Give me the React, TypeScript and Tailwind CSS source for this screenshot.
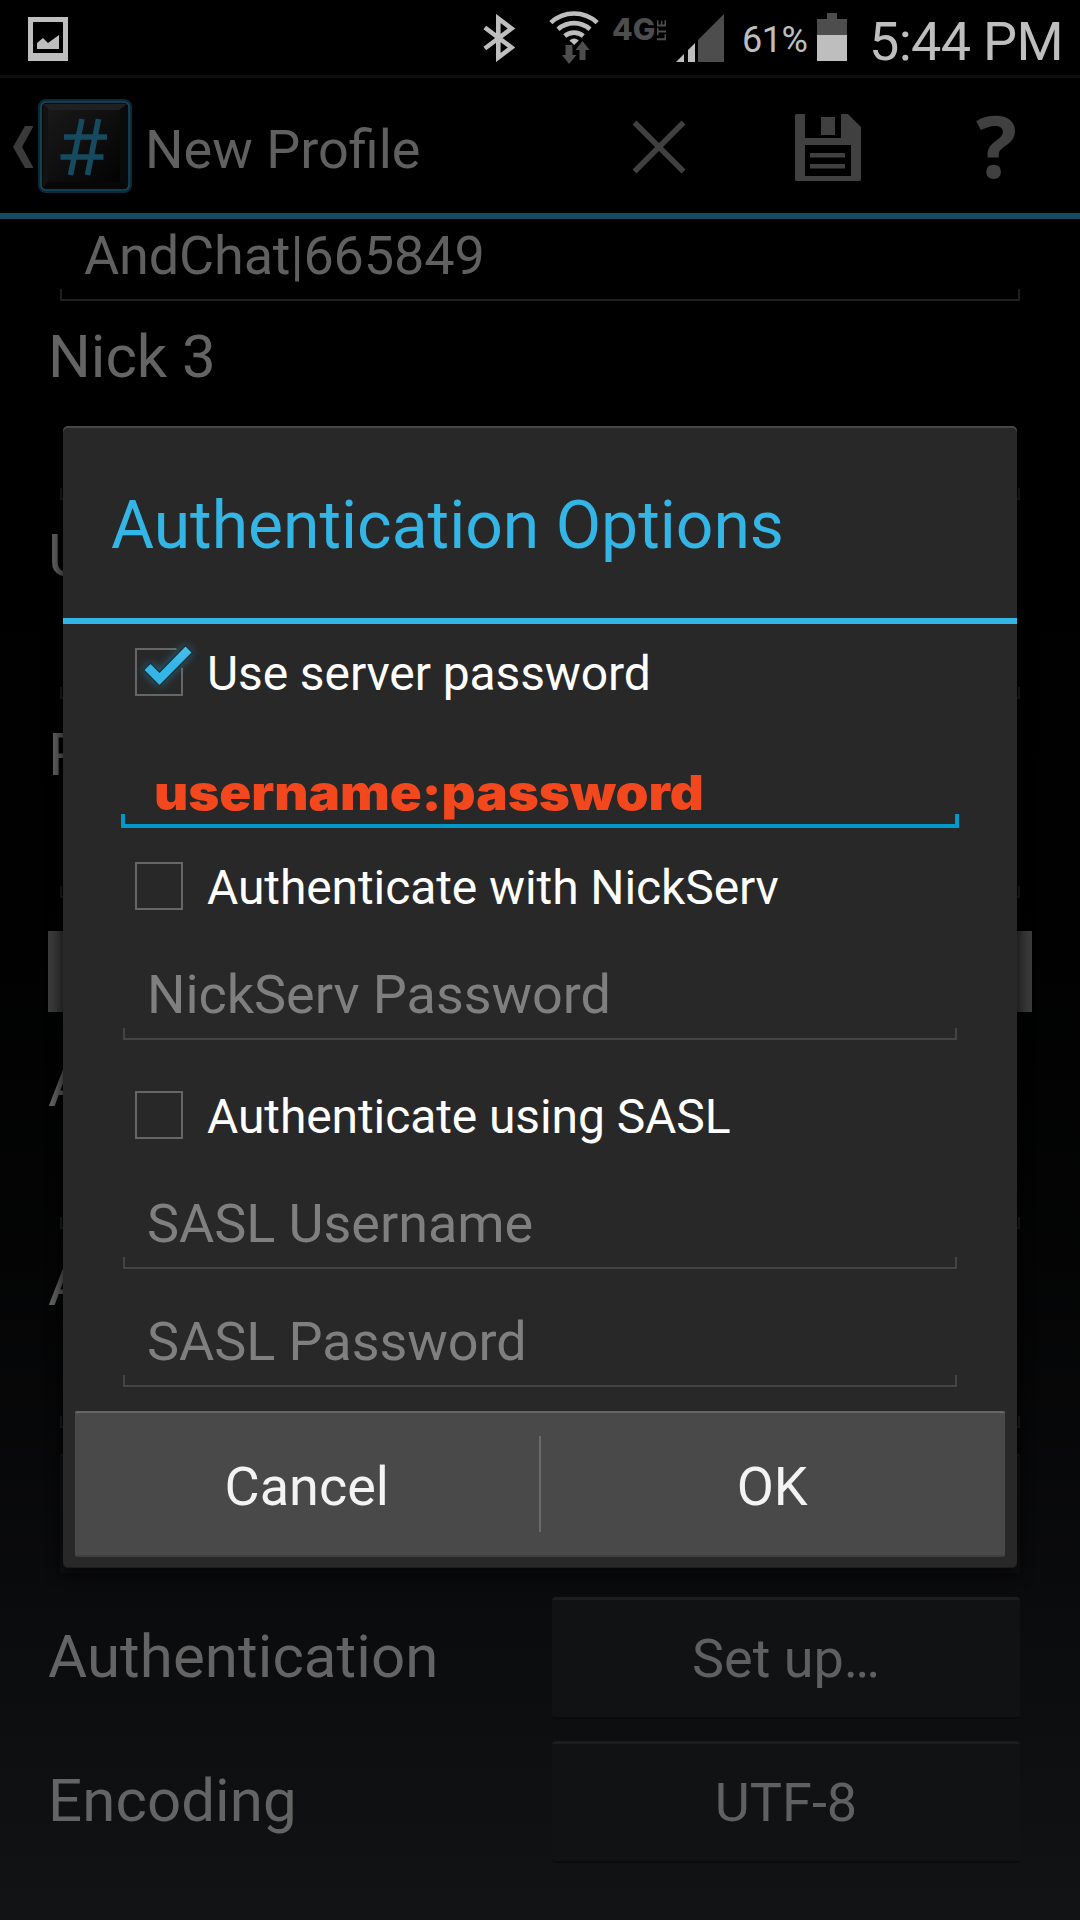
import React from "react";

function StatusBar() {
  return (
    <div className="flex h-[78px] shrink-0 items-start border-b-[3px] border-[#0d0d0d] bg-black text-[#bebebe]">
      <svg className="mt-[17px] ml-[28px] shrink-0" width="40" height="44" viewBox="0 0 40 44" fill="currentColor">
        <path fillRule="evenodd" d="M0 0H40V44H0ZM5 5V36H35V5Z" />
        <path d="M9 32V26L15 21L20 26L31 18V32Z" />
      </svg>
      <svg className="mt-[14px] ml-[415px] shrink-0" width="34" height="48" viewBox="0 0 34 48" fill="none" stroke="currentColor" strokeWidth="4.6">
        <path d="M1.8 13.5L28.5 33.5L15.3 43.5V4.5L28.5 14.5L1.8 34.5" strokeMiterlimit="10" />
      </svg>
      <svg className="mt-[11px] ml-[32px] shrink-0" width="50" height="54" viewBox="0 0 50 54" fill="none">
        <g stroke="#bebebe" strokeWidth="4.6">
          <path d="M1.8 11.6A34 34 0 0 1 48.2 11.6" />
          <path d="M9 18.2A24 24 0 0 1 41 18.2" />
          <path d="M15.7 25A14.5 14.5 0 0 1 34.3 25" />
        </g>
        <path fill="#bebebe" d="M20.5 29.5Q25 25.5 29.8 29.5L25.2 34Z" />
        <path fill="#4d4d4d" d="M16.5 34H23.5V44H27.5L20 53L13 44H16.5Z" />
        <path fill="#4d4d4d" d="M33.5 30L40.5 39H36.5V49H30.5V39H26.5Z" />
      </svg>
      <span className="mt-[11px] ml-[13px] w-[44px] shrink-0 font-['Inter'] text-[30px] leading-[36px] font-extrabold text-[#4d4d4d]">4G</span>
      <span className="mt-[17px] h-[24px] w-[11px] shrink-0 rotate-180 font-['Roboto'] text-[13px] leading-[11px] font-bold text-[#4d4d4d] [writing-mode:vertical-rl]">LTE</span>
      <svg className="mt-[14px] ml-[9px] shrink-0" width="48" height="48" viewBox="0 0 48 48">
        <path fill="#bebebe" d="M0 48L8 40V48ZM12 36L19 29V48H12Z" />
        <path fill="#4d4d4d" d="M22 26L48 0V48H22Z" />
      </svg>
      <span className="mt-[20px] ml-[18px] w-[75px] shrink-0 text-[36px] leading-[41px] tracking-[-0.5px]">61%</span>
      <svg className="mt-[13px] shrink-0" width="30" height="48" viewBox="0 0 30 48">
        <path fill="#4d4d4d" d="M10 0H20V6H30V22H0V6H10Z" />
        <path fill="#bebebe" d="M0 22H30V48H0Z" />
      </svg>
      <span className="mt-[10px] ml-[22px] text-[54px] leading-[63px] tracking-[-0.7px] whitespace-nowrap">5:44 PM</span>
    </div>
  );
}

function ActionBar() {
  return (
    <div className="flex h-[141px] shrink-0 items-start border-b-[6px] border-[#154a60]">
      <svg className="mt-[48px] ml-[13px] shrink-0" width="20" height="42" viewBox="0 0 20 42">
        <path fill="#3a3a3a" d="M12 0H20.5L9 21L20.5 42H12L0 21Z" />
      </svg>
      <svg className="mt-[19px] ml-[3px] shrink-0" width="98" height="98" viewBox="0 0 98 98">
        <defs>
          <linearGradient id="tile" x1="0" y1="0" x2="1" y2="1">
            <stop offset="0" stopColor="#191919" />
            <stop offset="1" stopColor="#030303" />
          </linearGradient>
        </defs>
        <rect x="4" y="4" width="90" height="90" rx="6" fill="none" stroke="#0c2a37" strokeWidth="4" />
        <rect x="5" y="5" width="88" height="88" rx="5" fill="#0a0a0a" stroke="#154a60" strokeWidth="1.6" />
        <path d="M7 7H91L83 13H13Z" fill="#202020" />
        <path d="M7 7L13 13V84L7 91Z" fill="#121212" />
        <path d="M7 91L13 84H83L91 91Z" fill="#070707" />
        <rect x="12" y="13" width="72" height="72" fill="url(#tile)" />
        <path d="M46 22L34.5 78M62.5 22L51.5 78M28 40H71M24.5 60H67.5" stroke="#154a60" strokeWidth="5.6" fill="none" />
      </svg>
      <span className="mt-[40px] ml-[11px] w-[487px] shrink-0 text-[54px] leading-[63px] text-[#606060]">New Profile</span>
      <svg className="mt-[42px] shrink-0" width="54" height="54" viewBox="0 0 54 54">
        <path d="M2.5 2.5L51.5 51.5M51.5 2.5L2.5 51.5" stroke="#404040" strokeWidth="5.5" />
      </svg>
      <svg className="mt-[36px] ml-[109px] shrink-0" width="66" height="67" viewBox="0 0 66 67" fill="#404040">
        <path fillRule="evenodd" d="M1.5 0H10V24H46V0H53L66 13V65.5Q66 67 64.5 67H1.5Q0 67 0 65.5V1.5Q0 0 1.5 0ZM10 31V62H56V31Z" />
        <path d="M26 3H40V21H26ZM15 39H50V43.5H15ZM15 50H50V54.5H15Z" />
      </svg>
      <span className="mt-[22px] ml-[115px] font-['Open_Sans'] text-[86px] leading-[90px] font-bold text-[#404040]">?</span>
    </div>
  );
}

function FieldLine() {
  return <div className="mx-[60px] h-[12px] border-x-2 border-b-2 border-[#1e1f1f]" />;
}

function FormGroup({ label }: { label: string }) {
  return (
    <div className="flex h-[199px] shrink-0 flex-col justify-between">
      <div className="pl-[48px] text-[60px] leading-[111px]">{label}</div>
      <FieldLine />
    </div>
  );
}

const formButton =
  "flex h-[122px] shrink-0 items-center justify-center rounded-[4px] border-t-[3px] border-b-2 border-t-[#1c1d1f] border-b-[#0a0b0c] bg-[#111214] text-[54px] text-[#606060]";

function FormRow({ label, value }: { label: string; value: string }) {
  return (
    <div className="mt-[22px] flex h-[122px] shrink-0 items-center pr-[60px] pl-[48px]">
      <span className="w-[504px] pb-[3px] text-[60px] tracking-[0.08px]">{label}</span>
      <div className={formButton + " flex-1"}>{value}</div>
    </div>
  );
}

function ProfileForm() {
  return (
    <div className="flex min-h-0 flex-1 flex-col overflow-hidden text-[#646464]">
      <div className="flex h-[82px] shrink-0 flex-col">
        <div className="h-[70px] pl-[84px] text-[54px] leading-[73px] tracking-[-0.15px] text-[#606060]">AndChat|665849</div>
        <FieldLine />
      </div>
      <FormGroup label="Nick 3" />
      <FormGroup label="U" />
      <FormGroup label="R" />
      <div className="mx-[48px] mt-[33px] mb-[18px] h-[81px] shrink-0 bg-[#3c3c3c]" />
      <FormGroup label="A" />
      <FormGroup label="A" />
      <div className={formButton + " mx-[60px] mt-[25px]"} />
      <FormRow label="Authentication" value="Set up…" />
      <FormRow label="Encoding" value="UTF-8" />
    </div>
  );
}

function CheckRow({ label, checked }: { label: string; checked?: boolean }) {
  return (
    <div className="flex h-[96px] items-center pl-[72px]">
      <div className="relative h-[48px] w-[48px] shrink-0 border-2 border-[#666666]">
        {checked && (
          <svg className="absolute -top-[22px] -left-[12px]" width="90" height="80" viewBox="0 0 90 80">
            <defs>
              <linearGradient id="tick" x1="0" y1="0" x2="0" y2="1">
                <stop offset="0" stopColor="#50bfea" />
                <stop offset="0.5" stopColor="#33b5e5" />
                <stop offset="1" stopColor="#33b5e5" />
              </linearGradient>
              <filter id="glow" x="-50%" y="-50%" width="200%" height="200%">
                <feGaussianBlur stdDeviation="5" />
              </filter>
            </defs>
            <path d="M51 18H62V40H55Z" fill="#282828" />
            <path d="M18.5 42L25.5 35L34.5 44L60.5 17.5L67.5 24.5L34.5 58Z" fill="#33b5e5" opacity="0.5" filter="url(#glow)" />
            <path d="M18.5 42L25.5 35L34.5 44L60.5 17.5L67.5 24.5L34.5 58Z" fill="url(#tick)" stroke="#16323f" strokeWidth="1.5" />
          </svg>
        )}
      </div>
      <span className="mt-[3px] ml-[24px] text-[48px] tracking-[-0.1px] whitespace-nowrap text-white">{label}</span>
    </div>
  );
}

function HintField({ hint, className }: { hint: string; className: string }) {
  return (
    <div className={"mx-[60px] flex flex-col justify-end " + className}>
      <div className="h-[79px] pl-[24px] text-[54px] leading-[91px] tracking-[-0.05px] text-[#7f7f7f]">{hint}</div>
      <div className="h-[12px] border-x-2 border-b-2 border-[#444444]" />
    </div>
  );
}

function AuthDialog() {
  return (
    <div className="absolute inset-0 flex items-start justify-center pt-[426px]">
      <div className="flex h-[1142px] w-[954px] flex-col rounded-[5px] bg-[#282828] shadow-[0_5px_16px_1px_rgba(0,0,0,0.85),inset_0_2px_0_#454545,inset_0_-1px_0_#1c1c1c]">
        <h1 className="h-[192px] shrink-0 pl-[48px] text-[66px] leading-[199px] whitespace-nowrap text-[#33b5e5]">Authentication Options</h1>
        <div className="h-[6px] shrink-0 bg-[#33b5e5]" />
        <CheckRow label="Use server password" checked />
        <div className="mx-[58px] flex h-[108px] flex-col justify-end">
          <div className="flex h-[70px] items-start pl-[33px] font-['Inter'] text-[48px] leading-[97px] font-black text-[#f3481d]">
            <span className="origin-left scale-x-110">username:password</span>
          </div>
          <div className="h-[14px] shrink-0 border-x-4 border-b-4 border-[#0099cc]" />
        </div>
        <div className="h-[10px]" />
        <CheckRow label="Authenticate with NickServ" />
        <HintField hint="NickServ Password" className="h-[106px]" />
        <div className="h-[27px]" />
        <CheckRow label="Authenticate using SASL" />
        <HintField hint="SASL Username" className="h-[106px]" />
        <HintField hint="SASL Password" className="h-[118px]" />
        <div className="mx-[12px] mt-[24px] flex h-[146px] items-center rounded-[2px] border-t-2 border-b-2 border-t-[#666666] border-b-[#3f3f3f] bg-[#494949] text-[54px] text-[#f3f3f3]">
          <button className="flex-1 pt-[4px]">Cancel</button>
          <div className="h-[96px] w-[2px] bg-[#6a6a6a]" />
          <button className="flex-1 pt-[4px] pr-[1px]">OK</button>
        </div>
      </div>
    </div>
  );
}

export default function App() {
  return (
    <div className="relative flex h-[1920px] w-[1080px] flex-col overflow-hidden bg-linear-to-b from-black from-15% to-[#121315] font-['Roboto',sans-serif]">
      <StatusBar />
      <ActionBar />
      <ProfileForm />
      <AuthDialog />
    </div>
  );
}
